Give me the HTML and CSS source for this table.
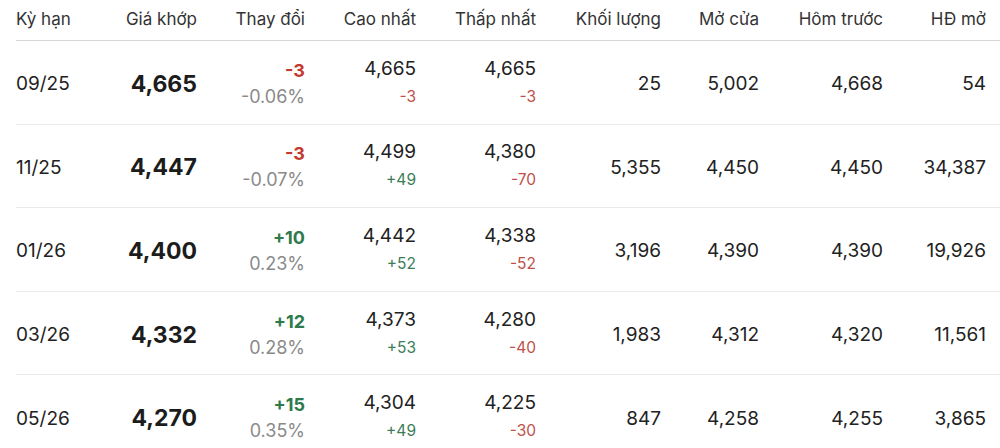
FILE: index.html
```html
<!DOCTYPE html>
<html lang="vi">
<head>
<meta charset="utf-8">
<title>Hợp đồng tương lai</title>
<link rel="stylesheet" href="styles.css">
</head>
<body>
<div class="board">
  <div class="row head">
    <div class="c left">Kỳ hạn</div>
    <div class="c">Giá khớp</div>
    <div class="c">Thay đổi</div>
    <div class="c">Cao nhất</div>
    <div class="c">Thấp nhất</div>
    <div class="c">Khối lượng</div>
    <div class="c">Mở cửa</div>
    <div class="c">Hôm trước</div>
    <div class="c">HĐ mở</div>
  </div>

  <div class="row">
    <div class="c left">09/25</div>
    <div class="c price">4,665</div>
    <div class="c stack"><span class="chg down">-3</span><span class="pct">-0.06%</span></div>
    <div class="c stack hl"><span>4,665</span><span class="sub down">-3</span></div>
    <div class="c stack hl"><span>4,665</span><span class="sub down">-3</span></div>
    <div class="c">25</div>
    <div class="c">5,002</div>
    <div class="c">4,668</div>
    <div class="c">54</div>
  </div>

  <div class="row">
    <div class="c left">11/25</div>
    <div class="c price">4,447</div>
    <div class="c stack"><span class="chg down">-3</span><span class="pct">-0.07%</span></div>
    <div class="c stack hl"><span>4,499</span><span class="sub up">+49</span></div>
    <div class="c stack hl"><span>4,380</span><span class="sub down">-70</span></div>
    <div class="c">5,355</div>
    <div class="c">4,450</div>
    <div class="c">4,450</div>
    <div class="c">34,387</div>
  </div>

  <div class="row">
    <div class="c left">01/26</div>
    <div class="c price">4,400</div>
    <div class="c stack"><span class="chg up">+10</span><span class="pct">0.23%</span></div>
    <div class="c stack hl"><span>4,442</span><span class="sub up">+52</span></div>
    <div class="c stack hl"><span>4,338</span><span class="sub down">-52</span></div>
    <div class="c">3,196</div>
    <div class="c">4,390</div>
    <div class="c">4,390</div>
    <div class="c">19,926</div>
  </div>

  <div class="row">
    <div class="c left">03/26</div>
    <div class="c price">4,332</div>
    <div class="c stack"><span class="chg up">+12</span><span class="pct">0.28%</span></div>
    <div class="c stack hl"><span>4,373</span><span class="sub up">+53</span></div>
    <div class="c stack hl"><span>4,280</span><span class="sub down">-40</span></div>
    <div class="c">1,983</div>
    <div class="c">4,312</div>
    <div class="c">4,320</div>
    <div class="c">11,561</div>
  </div>

  <div class="row">
    <div class="c left">05/26</div>
    <div class="c price">4,270</div>
    <div class="c stack"><span class="chg up">+15</span><span class="pct">0.35%</span></div>
    <div class="c stack hl"><span>4,304</span><span class="sub up">+49</span></div>
    <div class="c stack hl"><span>4,225</span><span class="sub down">-30</span></div>
    <div class="c">847</div>
    <div class="c">4,258</div>
    <div class="c">4,255</div>
    <div class="c">3,865</div>
  </div>
</div>
</body>
</html>
```

FILE: styles.css
```css
html, body {
  margin: 0;
  padding: 0;
  background: #ffffff;
  overflow: hidden;
}

body {
  font-family: Inter, "Noto Sans", "DejaVu Sans", sans-serif;
  color: #222222;
}

.board {
  margin-left: 16px;
  width: 984px;
}

.row {
  display: grid;
  grid-template-columns: 80px 101px 108px 111px 120px 125px 98px 124px 103px;
  padding-right: 14px;
  padding-top: 3px;
  height: 83.6px;
  box-sizing: border-box;
  border-bottom: 1px solid #ebebeb;
  align-items: center;
  font-size: 19px;
}

.row.head {
  height: 41px;
  padding-top: 0;
  padding-bottom: 2px;
  border-bottom: 1px solid #d6d6d6;
  font-size: 17px;
  color: #333333;
}

.c {
  text-align: right;
  white-space: nowrap;
}

.c.left {
  text-align: left;
}

.price {
  font-size: 23px;
  font-weight: 700;
  color: #1c1c1c;
}

.stack {
  display: flex;
  flex-direction: column;
  align-items: flex-end;
}

.stack span {
  line-height: 26px;
}

.chg {
  font-size: 18px;
  font-weight: 700;
}

.pct {
  font-size: 18px;
  color: #8a8a8a;
}

.hl .sub {
  font-size: 15.5px;
  line-height: 30px;
}

.down {
  color: #c3392e;
}

.up {
  color: #2f7a4c;
}

.hl .sub.down {
  color: #c0504a;
}

.hl .sub.up {
  color: #3c7d57;
}
```
